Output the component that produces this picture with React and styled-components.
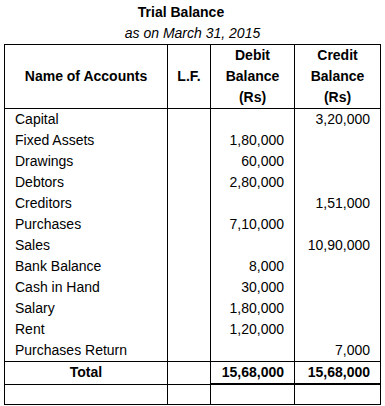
import styled, { createGlobalStyle } from 'styled-components';

const GlobalStyle = createGlobalStyle`
  body {
    margin: 0;
    background: #fff;
    font-family: "Liberation Sans", Arial, sans-serif;
    color: #000;
  }
`;

const Page = styled.div`
  padding: 2px 4px 0 4px;
  width: 377px;
`;

const Title = styled.div`
  font-size: 14px;
  font-weight: bold;
  line-height: 21px;
  text-align: center;
  padding-right: 23px;
`;

const Subtitle = styled.div`
  font-size: 14px;
  font-style: italic;
  line-height: 21px;
  text-align: center;
`;

const Table = styled.table`
  border-collapse: collapse;
  width: 377px;
  table-layout: fixed;
  font-size: 14px;
  border: 1px solid #000;
`;

const Th = styled.th`
  border: 1px solid #000;
  font-weight: bold;
  line-height: 21px;
  padding: 0 4px;
  text-align: center;
  vertical-align: middle;
`;

const Td = styled.td`
  border-left: 1px solid #000;
  border-right: 1px solid #000;
  height: 21px;
  line-height: 21px;
  padding: 0 10px;
  text-align: ${(p) => (p.$num ? 'right' : 'left')};
  white-space: nowrap;
`;

const TotalTd = styled.td`
  border: 1px solid #000;
  border-bottom: ${(p) => (p.$amount ? '2px' : '1px')} solid #000;
  height: 21px;
  line-height: 21px;
  padding: 0 10px;
  font-weight: bold;
  text-align: ${(p) => (p.$amount ? 'right' : 'center')};
`;

const EmptyTd = styled.td`
  border: 1px solid #000;
  height: 19px;
  padding: 0;
`;

const rows = [
  ['Capital', '', '3,20,000'],
  ['Fixed Assets', '1,80,000', ''],
  ['Drawings', '60,000', ''],
  ['Debtors', '2,80,000', ''],
  ['Creditors', '', '1,51,000'],
  ['Purchases', '7,10,000', ''],
  ['Sales', '', '10,90,000'],
  ['Bank Balance', '8,000', ''],
  ['Cash in Hand', '30,000', ''],
  ['Salary', '1,80,000', ''],
  ['Rent', '1,20,000', ''],
  ['Purchases Return', '', '7,000'],
];

export default function App() {
  return (
    <Page>
      <GlobalStyle />
      <Title>Trial Balance</Title>
      <Subtitle>as on March 31, 2015</Subtitle>
      <Table>
        <colgroup>
          <col style={{ width: 163 }} />
          <col style={{ width: 43 }} />
          <col style={{ width: 84 }} />
          <col style={{ width: 86 }} />
        </colgroup>
        <thead>
          <tr>
            <Th>Name of Accounts</Th>
            <Th>L.F.</Th>
            <Th>
              Debit
              <br />
              Balance
              <br />
              (Rs)
            </Th>
            <Th>
              Credit
              <br />
              Balance
              <br />
              (Rs)
            </Th>
          </tr>
        </thead>
        <tbody>
          {rows.map(([name, dr, cr]) => (
            <tr key={name}>
              <Td>{name}</Td>
              <Td />
              <Td $num>{dr}</Td>
              <Td $num>{cr}</Td>
            </tr>
          ))}
          <tr>
            <TotalTd>Total</TotalTd>
            <TotalTd />
            <TotalTd $amount>15,68,000</TotalTd>
            <TotalTd $amount>15,68,000</TotalTd>
          </tr>
          <tr>
            <EmptyTd />
            <EmptyTd />
            <EmptyTd />
            <EmptyTd />
          </tr>
        </tbody>
      </Table>
    </Page>
  );
}
